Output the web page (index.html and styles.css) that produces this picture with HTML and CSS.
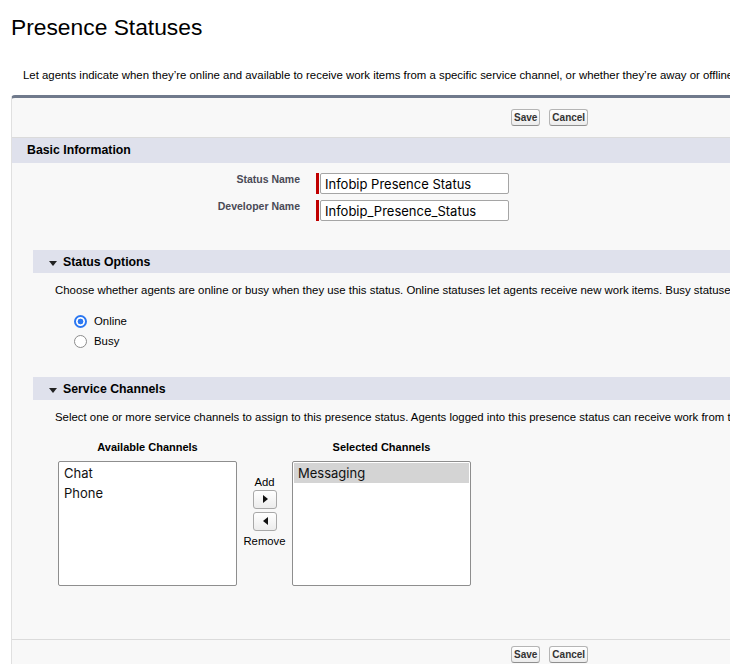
FILE: index.html
```html
<!DOCTYPE html>
<html lang="en">
<head>
    <meta charset="UTF-8">
    <meta name="viewport" content="width=device-width, initial-scale=1.0">
    <title>Presence Statuses</title>
    <link rel="stylesheet" href="styles.css">
</head>
<body>
    <h1 class="page-title">Presence Statuses</h1>
    <p class="page-intro">Let agents indicate when they’re online and available to receive work items from a specific service channel, or whether they’re away or offline.</p>

    <form class="edit-panel">
        <div class="button-row">
            <button type="button" class="btn">Save</button>
            <button type="button" class="btn">Cancel</button>
        </div>

        <div class="section-header">Basic Information</div>
        <div class="field-list">
            <div class="field-row">
                <label class="field-label" for="status-name">Status Name</label>
                <div class="required"><input id="status-name" type="text" value="Infobip Presence Status"></div>
            </div>
            <div class="field-row">
                <label class="field-label" for="dev-name">Developer Name</label>
                <div class="required"><input id="dev-name" type="text" value="Infobip_Presence_Status"></div>
            </div>
        </div>

        <div class="sub-section">
            <div class="sub-header"><span class="caret"></span>Status Options</div>
            <p class="sub-text">Choose whether agents are online or busy when they use this status. Online statuses let agents receive new work items. Busy statuses don’t.</p>
            <div class="radio-list">
                <label class="radio-item"><input type="radio" name="status-type" checked>Online</label>
                <label class="radio-item"><input type="radio" name="status-type">Busy</label>
            </div>
        </div>

        <div class="sub-section">
            <div class="sub-header"><span class="caret"></span>Service Channels</div>
            <p class="sub-text">Select one or more service channels to assign to this presence status. Agents logged into this presence status can receive work from these service channels.</p>
            <div class="channel-picker">
                <div class="channel-col">
                    <div class="col-title">Available Channels</div>
                    <ul class="list-box">
                        <li>Chat</li>
                        <li>Phone</li>
                    </ul>
                </div>
                <div class="move-buttons">
                    <span>Add</span>
                    <button type="button" class="arrow-btn right" title="Add"></button>
                    <button type="button" class="arrow-btn left" title="Remove"></button>
                    <span class="remove-label">Remove</span>
                </div>
                <div class="channel-col">
                    <div class="col-title">Selected Channels</div>
                    <ul class="list-box">
                        <li class="selected">Messaging</li>
                    </ul>
                </div>
            </div>
        </div>

        <div class="button-row bottom">
            <button type="button" class="btn">Save</button>
            <button type="button" class="btn">Cancel</button>
        </div>
    </form>
</body>
</html>
```

FILE: styles.css
```css
html,
body {
    overflow: hidden;
}

body {
    margin: 0;
    background-color: #ffffff;
    font-family: "Liberation Sans", Arial, sans-serif;
    color: #000000;
}

.page-title {
    margin: 0;
    padding: 14px 0 0 11px;
    font-size: 22.8px;
    line-height: 26px;
    font-weight: normal;
}

.page-intro {
    margin: 28px 0 13px;
    padding-left: 23px;
    font-size: 11.4px;
    line-height: 14px;
    white-space: nowrap;
}

.edit-panel {
    margin-left: 11px;
    width: 800px;
    background-color: #f8f8f8;
    border-top: 3px solid #707a8c;
    border-left: 1px solid #e0e0e0;
    border-radius: 4px 0 0 0;
}

.button-row {
    display: flex;
    gap: 9px;
    height: 40px;
    padding: 11px 0 0 499px;
    box-sizing: border-box;
    border-bottom: 1px solid #dbdbdb;
}

.button-row.bottom {
    border-bottom: none;
    border-top: 1px solid #dbdbdb;
    padding-top: 6px;
    height: 25px;
}

.btn {
    height: 17px;
    padding: 0 2px;
    font-family: "Liberation Sans", Arial, sans-serif;
    font-size: 10px;
    font-weight: bold;
    color: #333333;
    background: linear-gradient(#ffffff, #ececec);
    border: 1px solid #b5b5b5;
    border-bottom-color: #8f8f8f;
    border-radius: 3px;
    cursor: pointer;
}

.section-header {
    height: 25px;
    line-height: 25px;
    padding-left: 15px;
    background-color: #dfe1ec;
    font-size: 12.3px;
    font-weight: bold;
}

.field-list {
    display: flex;
    flex-direction: column;
    gap: 6px;
    padding: 10px 0 29px;
}

.field-row {
    display: flex;
    align-items: flex-start;
    gap: 16px;
}

.field-label {
    width: 288px;
    text-align: right;
    font-size: 10.5px;
    line-height: 12px;
    font-weight: bold;
    color: #4a4a56;
}

.required {
    display: flex;
    border-left: 3px solid #c00000;
    padding-left: 1px;
}

.required input {
    width: 189px;
    height: 21px;
    box-sizing: border-box;
    margin: 0;
    padding: 0 4px;
    font-family: Inter, "Liberation Sans", sans-serif;
    font-size: 13px;
    color: #000000;
    background-color: #ffffff;
    border: 1px solid #a5a5a5;
    border-radius: 2px;
}

.sub-section {
    margin-left: 21px;
}

.sub-section + .sub-section {
    margin-top: 26px;
}

.sub-header {
    display: flex;
    align-items: center;
    height: 23px;
    background-color: #dfe1ec;
    font-size: 12.3px;
    font-weight: bold;
}

.caret {
    width: 0;
    height: 0;
    margin: 3px 6px 0 16px;
    border-left: 4px solid transparent;
    border-right: 4px solid transparent;
    border-top: 5px solid #222222;
}

.sub-text {
    margin: 10px 0 0 22px;
    font-size: 11.4px;
    line-height: 14px;
    white-space: nowrap;
}

.radio-list {
    display: flex;
    flex-direction: column;
    margin: 14px 0 0 41px;
}

.radio-item {
    display: flex;
    align-items: center;
    gap: 7px;
    height: 20px;
    font-size: 11.4px;
}

.radio-item input {
    appearance: none;
    width: 13px;
    height: 13px;
    margin: 0;
    border: 1px solid #8c8c8c;
    border-radius: 50%;
    background-color: #ffffff;
}

.radio-item input:checked {
    border: 2px solid #2b77f1;
    background: radial-gradient(circle, #2b77f1 0 2.6px, #ffffff 3.2px);
}

.channel-picker {
    display: flex;
    margin: 17px 0 0 25px;
    padding-bottom: 53px;
}

.channel-col {
    width: 179px;
}

.col-title {
    text-align: center;
    font-size: 11px;
    line-height: 13px;
    font-weight: bold;
    margin-bottom: 7px;
}

.list-box {
    height: 125px;
    box-sizing: border-box;
    margin: 0;
    padding: 1px;
    list-style: none;
    background-color: #ffffff;
    border: 1px solid #8e8e8e;
    border-radius: 2px;
}

.list-box li {
    height: 20px;
    line-height: 20px;
    padding-left: 4px;
    font-family: Inter, "Liberation Sans", sans-serif;
    font-size: 13px;
    color: #111111;
}

.list-box li.selected {
    background-color: #d4d4d4;
}

.move-buttons {
    width: 55px;
    display: flex;
    flex-direction: column;
    align-items: center;
    padding-top: 35px;
    font-size: 11.3px;
    line-height: 13px;
}

.arrow-btn {
    position: relative;
    width: 24px;
    height: 19px;
    margin: 1px 0 0;
    padding: 0;
    background: linear-gradient(#ffffff, #ececec);
    border: 1px solid #a8a8a8;
    border-radius: 3px;
    cursor: pointer;
}

.arrow-btn + .arrow-btn {
    margin-top: 3px;
}

.arrow-btn::after {
    content: "";
    position: absolute;
    top: 4px;
    left: 9px;
    border-top: 4px solid transparent;
    border-bottom: 4px solid transparent;
}

.arrow-btn.right::after {
    border-left: 5px solid #111111;
}

.arrow-btn.left::after {
    border-right: 5px solid #111111;
}

.remove-label {
    margin-top: 4px;
}
```
